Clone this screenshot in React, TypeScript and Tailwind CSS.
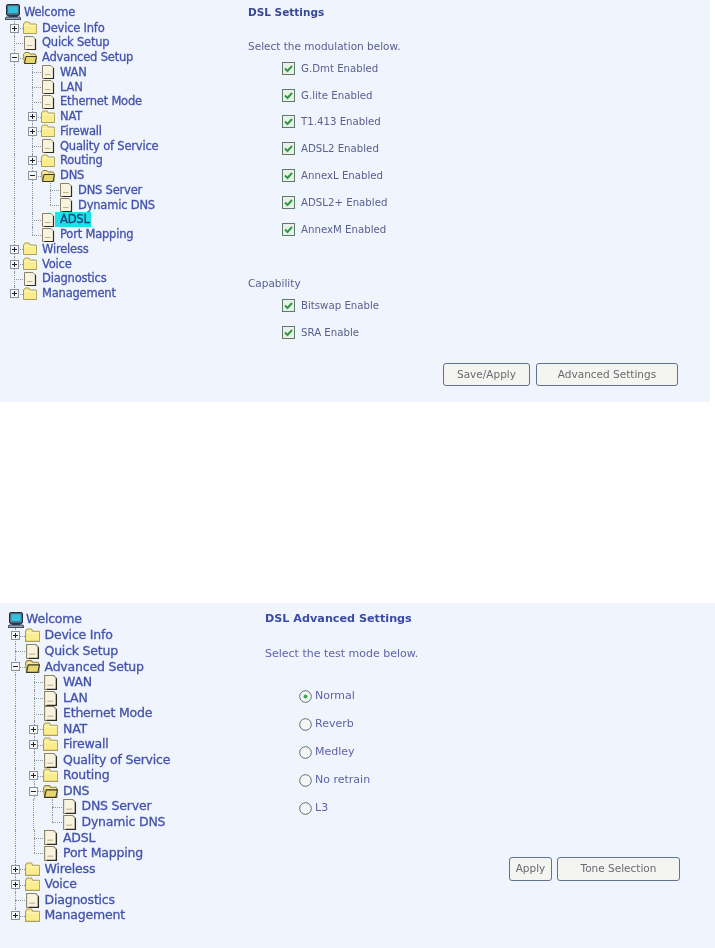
import React from "react";

type Row = { label: string; level: number; kind: "folder" | "open" | "doc"; exp?: "+" | "-" };

const rows: Row[] = [
  { label: "Device Info", level: 0, kind: "folder", exp: "+" },
  { label: "Quick Setup", level: 0, kind: "doc" },
  { label: "Advanced Setup", level: 0, kind: "open", exp: "-" },
  { label: "WAN", level: 1, kind: "doc" },
  { label: "LAN", level: 1, kind: "doc" },
  { label: "Ethernet Mode", level: 1, kind: "doc" },
  { label: "NAT", level: 1, kind: "folder", exp: "+" },
  { label: "Firewall", level: 1, kind: "folder", exp: "+" },
  { label: "Quality of Service", level: 1, kind: "doc" },
  { label: "Routing", level: 1, kind: "folder", exp: "+" },
  { label: "DNS", level: 1, kind: "open", exp: "-" },
  { label: "DNS Server", level: 2, kind: "doc" },
  { label: "Dynamic DNS", level: 2, kind: "doc" },
  { label: "ADSL", level: 1, kind: "doc" },
  { label: "Port Mapping", level: 1, kind: "doc" },
  { label: "Wireless", level: 0, kind: "folder", exp: "+" },
  { label: "Voice", level: 0, kind: "folder", exp: "+" },
  { label: "Diagnostics", level: 0, kind: "doc" },
  { label: "Management", level: 0, kind: "folder", exp: "+" },
];

function Computer() {
  return (
    <svg viewBox="0 0 16 16" className="w-[16px] h-[16px] shrink-0">
      <rect x="1.500" y="0.500" width="13" height="11" rx="1.500" fill="#56677f" stroke="#1f2c40" />
      <rect x="3.200" y="2.200" width="9.600" height="7" fill="#2fc3de" />
      <path d="M3.500 11.500h9v1.500h-9z" fill="#33445c" />
      <path d="M1 13h14l1 2.500H0z" fill="#9aa6b6" stroke="#1f2c40" strokeWidth="0.800" />
    </svg>
  );
}

function Icon({ kind }: { kind: Row["kind"] }) {
  if (kind === "doc") {
    return (
      <svg viewBox="0 0 14 14" className="w-full h-full">
        <path d="M1.500 .5h8.500l2.500 2.500v10.500h-11z" fill="#f8f3df" stroke="#8a8268" />
        <path d="M12.500 3v10.500h-9" fill="none" stroke="#2f2b20" strokeWidth="1.200" />
        <path d="M4 9.500h5.500" stroke="#bdb28e" />
      </svg>
    );
  }
  if (kind === "open") {
    return (
      <svg viewBox="0 0 14 14" className="w-full h-full">
        <path d="M.5 3.500 2 1.500h4l1 1.500h5l1 1.500v8H1.500z" fill="#f6e68f" stroke="#8a8048" />
        <path d="M3 5.500h10.500l-1.500 7H1.500z" fill="#e8d66e" stroke="#3a3826" />
      </svg>
    );
  }
  return (
    <svg viewBox="0 0 14 14" className="w-full h-full">
      <path d="M.5 3 2 1h4l1.300 2h5.700l.7 1v8.500H.5z" fill="#fbec8e" stroke="#a89f5c" />
      <path d="M1.300 4.500h11.500" stroke="#fff8c8" />
    </svg>
  );
}

function Expander({ sign }: { sign: "+" | "-" }) {
  return (
    <svg viewBox="0 0 9 9" className="relative w-[9px] h-[9px]">
      <rect x="0.500" y="0.500" width="8" height="8" fill="#f6f7f7" stroke="#8b93a0" />
      <path d={sign === "+" ? "M2 4.500h5M4.500 2v5" : "M2 4.500h5"} stroke="#222" />
    </svg>
  );
}

function guides(i: number, level: number) {
  if (level === 0) return i >= 3 && i <= 17;
  if (level === 1) return i >= 11 && i <= 13;
  return false;
}

function Tree({ large }: { large: boolean }) {
  const text = large ? "text-[12.5px]" : "text-[11.5px]";
  const rowH = large ? "h-[15.55px]" : "h-[14.75px]";
  const cellW = large ? "w-[18.5px]" : "w-[18px]";
  const iconBox = large ? "w-[15px] h-[15px]" : "w-[14px] h-[14px]";
  return (
    <div className={`flex flex-col text-[#4453ab] font-['DejaVu_Sans',sans-serif] tracking-[-0.2px] [-webkit-text-stroke:0.3px] ${text}`}>
      <div className={`flex items-center ${rowH} ${large ? "pl-[8px] mb-[0.5px] gap-[2px]" : "pl-[5px] mb-[1px] gap-[3px]"}`}>
        <Computer />
        <span>Welcome</span>
      </div>
      {rows.map((r, i) => {
        const hl = r.label === "ADSL" && !large;
        const halfLine = i === 12 || i === 14 || i === 18;
        return (
          <div key={r.label} className={`flex items-center ${rowH} ${large ? "pl-[6px]" : "pl-[5px]"}`}>
            {Array.from({ length: r.level }).map((_, l) => (
              <div key={l} className={`${cellW} h-full flex justify-center`}>
                {guides(i, l) && <div className="h-full border-l border-dotted border-[#8f96a0]" />}
              </div>
            ))}
            <div className={`${cellW} h-full shrink-0 relative flex items-center justify-center`}>
              <div className={`absolute left-1/2 top-0 border-l border-dotted border-[#8f96a0] ${halfLine ? "h-1/2" : "h-full"}`} />
              <div className="absolute left-1/2 right-0 top-1/2 border-t border-dotted border-[#8f96a0]" />
              {r.exp && <Expander sign={r.exp} />}
            </div>
            <div className={`${iconBox} shrink-0`}>
              <Icon kind={r.kind} />
            </div>
            {hl ? (
              <span className="pl-[5px] pr-[1px] h-[15px] leading-[15px] whitespace-nowrap bg-[#1fe0e6] text-[#1b3f7d]">{r.label}</span>
            ) : (
              <span className={`whitespace-nowrap ${large ? "ml-[5px]" : "ml-[5px]"}`}>{r.label}</span>
            )}
          </div>
        );
      })}
    </div>
  );
}

function Check({ label }: { label: string }) {
  return (
    <div className="flex items-center h-[26.8px] pl-[34px] gap-[6px]">
      <svg viewBox="0 0 13 13" className="w-[13px] h-[13px]">
        <rect x="0.500" y="0.500" width="12" height="12" fill="#e9f1e6" stroke="#5c7a70" />
        <path d="M3 6.500 5.500 9 10 4" fill="none" stroke="#2e9a45" strokeWidth="2" />
      </svg>
      <span>{label}</span>
    </div>
  );
}

function Radio({ label, on }: { label: string; on?: boolean }) {
  return (
    <div className="flex items-center h-[28px] pl-[34px] gap-[3px]">
      <svg viewBox="0 0 13 13" className="w-[13px] h-[13px]">
        <circle cx="6.500" cy="6.500" r="5.800" fill="#f5f7f6" stroke="#5f6f6f" />
        {on && <circle cx="6.500" cy="6.500" r="2" fill="#39a84f" />}
      </svg>
      <span>{label}</span>
    </div>
  );
}

function Btn({ label, w, h }: { label: string; w: string; h: string }) {
  return (
    <button className={`${w} ${h} rounded-[3px] border-[1.5px] border-[#5f7290] bg-[#f4f4f0] text-[#6a6a72] text-[10.5px] flex items-center justify-center`}>
      {label}
    </button>
  );
}

export default function App() {
  return (
    <div className="w-[715px] h-[948px] bg-white font-['DejaVu_Sans',sans-serif] overflow-hidden">
      <div className="w-[710px] h-[402px] bg-[#eff4fd] flex pt-[5px] blur-[0.5px]">
        <div className="w-[248px] shrink-0">
          <Tree large={false} />
        </div>
        <div className="flex-1 flex flex-col text-[#5a6090] text-[10.5px]">
          <div className="font-bold text-[#3a4795] h-[14px] leading-[14px]">DSL Settings</div>
          <div className="mt-[20px] h-[14px] leading-[14px]">Select the modulation below.</div>
          <div className="mt-[2px] text-[10.2px]">
            {["G.Dmt Enabled", "G.lite Enabled", "T1.413 Enabled", "ADSL2 Enabled", "AnnexL Enabled", "ADSL2+ Enabled", "AnnexM Enabled"].map((l) => (
              <Check key={l} label={l} />
            ))}
          </div>
          <div className="mt-[33px] h-[14px] leading-[14px]">Capability</div>
          <div className="mt-[3px] text-[10.2px]">
            <Check label="Bitswap Enable" />
            <Check label="SRA Enable" />
          </div>
          <div className="flex gap-[6px] mt-[17px] ml-[195px]">
            <Btn label="Save/Apply" w="w-[87px]" h="h-[23px]" />
            <Btn label="Advanced Settings" w="w-[142px]" h="h-[23px]" />
          </div>
        </div>
      </div>
      <div className="h-[201px]" />
      <div className="h-[345px] bg-[#eff4fd] flex pt-[9px] blur-[0.5px]">
        <div className="w-[265px] shrink-0">
          <Tree large />
        </div>
        <div className="flex-1 flex flex-col text-[#5f63a8] text-[11px]">
          <div className="font-bold text-[#3a4aa5] text-[11.2px] h-[14px] leading-[14px]">DSL Advanced Settings</div>
          <div className="mt-[21px] h-[14px] leading-[14px]">Select the test mode below.</div>
          <div className="mt-[21px]">
            <Radio label="Normal" on />
            <Radio label="Reverb" />
            <Radio label="Medley" />
            <Radio label="No retrain" />
            <Radio label="L3" />
          </div>
          <div className="flex gap-[5px] mt-[35px] ml-[244px]">
            <Btn label="Apply" w="w-[43px]" h="h-[24px]" />
            <Btn label="Tone Selection" w="w-[123px]" h="h-[24px]" />
          </div>
        </div>
      </div>
    </div>
  );
}
